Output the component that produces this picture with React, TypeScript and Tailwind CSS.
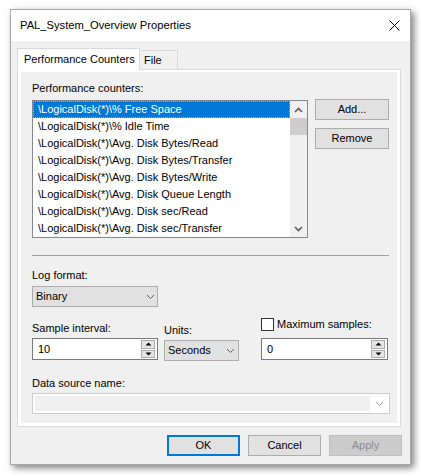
import React from "react";

const Chevron = ({ color = "#606060" }: { color?: string }) => (
  <svg width="9" height="6" viewBox="0 0 9 6" className="block">
    <polyline points="1,1 4.5,4.5 8,1" fill="none" stroke={color} strokeWidth="1" />
  </svg>
);

const ScrollArrow = ({ up }: { up?: boolean }) => (
  <div className="h-[17px] flex items-center justify-center">
    <svg width="9" height="6" viewBox="0 0 9 6" className="block">
      <polyline
        points={up ? "1,5 4.5,1.5 8,5" : "1,1 4.5,4.5 8,1"}
        fill="none"
        stroke="#606060"
        strokeWidth="1.7"
      />
    </svg>
  </div>
);

const Spinner = () => (
  <div className="w-[17px] h-full flex flex-col gap-[1px] p-[1px] pr-[2px] shrink-0">
    <div className="flex-1 border border-[#adadad] bg-[#e5e5e5] flex items-center justify-center">
      <svg width="7" height="4" viewBox="0 0 7 4" className="block">
        <polygon points="0.5,3.5 3.5,0.5 6.5,3.5" fill="#000" />
      </svg>
    </div>
    <div className="flex-1 border border-[#adadad] bg-[#e5e5e5] flex items-center justify-center">
      <svg width="7" height="4" viewBox="0 0 7 4" className="block">
        <polygon points="0.5,0.5 6.5,0.5 3.5,3.5" fill="#000" />
      </svg>
    </div>
  </div>
);

const items = [
  "\\LogicalDisk(*)\\% Free Space",
  "\\LogicalDisk(*)\\% Idle Time",
  "\\LogicalDisk(*)\\Avg. Disk Bytes/Read",
  "\\LogicalDisk(*)\\Avg. Disk Bytes/Transfer",
  "\\LogicalDisk(*)\\Avg. Disk Bytes/Write",
  "\\LogicalDisk(*)\\Avg. Disk Queue Length",
  "\\LogicalDisk(*)\\Avg. Disk sec/Read",
  "\\LogicalDisk(*)\\Avg. Disk sec/Transfer",
];

export default function App() {
  return (
    <div className="w-[421px] h-[476px] bg-white pt-[9px] pl-[10px] font-['Liberation_Sans',Arial,sans-serif] text-[11px] text-black">
      <div className="w-[401px] h-[456px] border border-[#a8a8a8] shadow-[3px_3px_7px_rgba(0,0,0,0.5)] flex flex-col bg-[#f0f0f0]">
        {/* Title bar */}
        <div className="h-[31px] bg-white flex items-center justify-between pl-[9px] pr-[10px] shrink-0">
          <span className="text-[11.2px]">PAL_System_Overview Properties</span>
          <svg width="11" height="11" viewBox="0 0 11 11" className="block">
            <path d="M0.5 0.5L10.5 10.5M10.5 0.5L0.5 10.5" stroke="#000" strokeWidth="1" />
          </svg>
        </div>

        {/* Body */}
        <div className="flex-1 pt-[7px] pl-[6px] pr-[9px] flex flex-col">
          {/* Tabs */}
          <div className="flex items-end h-[21px] relative z-10 shrink-0">
            <div className="h-[22px] -mb-px bg-white border border-b-0 border-[#d9d9d9] w-[123px] pl-[6px] leading-[20px]">
              Performance Counters
            </div>
            <div className="h-[19px] border border-l-0 border-b-0 border-[#d9d9d9] w-[38px] pl-[4px] leading-[19px]">
              File
            </div>
          </div>

          {/* Panel */}
          <div className="h-[358px] border border-[#d9d9d9] bg-white pt-[2px] px-[3px] pb-[3px] shrink-0">
            <div className="bg-[#f0f0f0] h-full pl-[11px] flex flex-col">
              <div className="mt-[9px] h-[15px] leading-[15px]">Performance counters:</div>

              <div className="mt-[3px] flex items-start">
                <div className="mt-[1px] w-[276px] h-[138px] border border-[#828790] bg-white flex">
                  <div className="flex-1 flex flex-col">
                    {items.map((t, i) =>
                      i === 0 ? (
                        <div
                          key={i}
                          className="h-[17px] leading-[15px] bg-[#0078d7] text-white border border-dotted border-[#ff9a3c] pl-[4px] whitespace-nowrap"
                        >
                          {t}
                        </div>
                      ) : (
                        <div key={i} className="h-[17px] leading-[17px] pl-[5px] whitespace-nowrap">
                          {t}
                        </div>
                      )
                    )}
                  </div>
                  <div className="w-[17px] bg-[#f0f0f0] flex flex-col">
                    <ScrollArrow up />
                    <div className="h-[17px] bg-[#cdcdcd]" />
                    <div className="flex-1" />
                    <ScrollArrow />
                  </div>
                </div>

                <div className="ml-[7px] flex flex-col gap-[8px]">
                  <div className="w-[74px] h-[21px] border border-[#adadad] bg-[#e1e1e1] flex items-center justify-center">
                    Add...
                  </div>
                  <div className="w-[74px] h-[21px] border border-[#adadad] bg-[#e1e1e1] flex items-center justify-center">
                    Remove
                  </div>
                </div>
              </div>

              <div className="mt-[17px] h-px w-[357px] bg-[#a0a0a0]" />

              <div className="mt-[12px] h-[15px] leading-[15px]">Log format:</div>
              <div className="mt-[3px] w-[126px] h-[21px] border border-[#adadad] bg-[#e1e1e1] pl-[3px] pr-[2px] flex items-center justify-between">
                <span>Binary</span>
                <Chevron />
              </div>

              <div className="flex items-start">
                <div className="w-[126px] flex flex-col">
                  <div className="mt-[14px] h-[15px] leading-[15px]">Sample interval:</div>
                  <div className="mt-[2px] h-[22px] border border-[#7a7a7a] bg-white flex items-center">
                    <span className="flex-1 pl-[5px]">10</span>
                    <Spinner />
                  </div>
                </div>
                <div className="ml-[6px] w-[75px] flex flex-col">
                  <div className="mt-[16px] h-[15px] leading-[15px]">Units:</div>
                  <div className="mt-[2px] h-[21px] border border-[#adadad] bg-[#e1e1e1] pl-[3px] pr-[3px] flex items-center justify-between">
                    <span>Seconds</span>
                    <Chevron />
                  </div>
                </div>
                <div className="ml-[22px] w-[127px] flex flex-col">
                  <div className="mt-[11px] h-[13px] flex items-center">
                    <div className="w-[13px] h-[13px] border border-[#333333] bg-white shrink-0" />
                    <span className="ml-[3px] leading-[13px]">Maximum samples:</span>
                  </div>
                  <div className="mt-[7px] h-[22px] border border-[#7a7a7a] bg-white flex items-center">
                    <span className="flex-1 pl-[5px]">0</span>
                    <Spinner />
                  </div>
                </div>
              </div>

              <div className="mt-[15px] h-[15px] leading-[15px]">Data source name:</div>
              <div className="mt-[2px] w-[358px] h-[21px] border border-[#cccccc] bg-white flex items-stretch pl-[2px] pt-[2px] pb-[2px]">
                <div className="flex-1 bg-[#f0f0f0]" />
                <div className="w-[19px] flex items-center justify-center">
                  <Chevron color="#a0a0a0" />
                </div>
              </div>
            </div>
          </div>

          {/* Buttons */}
          <div className="mt-[8px] flex justify-end gap-[8px] -mr-px">
            <div className="w-[73px] h-[21px] border-2 border-[#0078d7] bg-[#e1e1e1] flex items-center justify-center">
              OK
            </div>
            <div className="w-[73px] h-[21px] border border-[#adadad] bg-[#e1e1e1] flex items-center justify-center">
              Cancel
            </div>
            <div className="w-[73px] h-[21px] border border-[#bfbfbf] bg-[#cccccc] text-[#8c8c8c] flex items-center justify-center">
              Apply
            </div>
          </div>
        </div>
      </div>
    </div>
  );
}
